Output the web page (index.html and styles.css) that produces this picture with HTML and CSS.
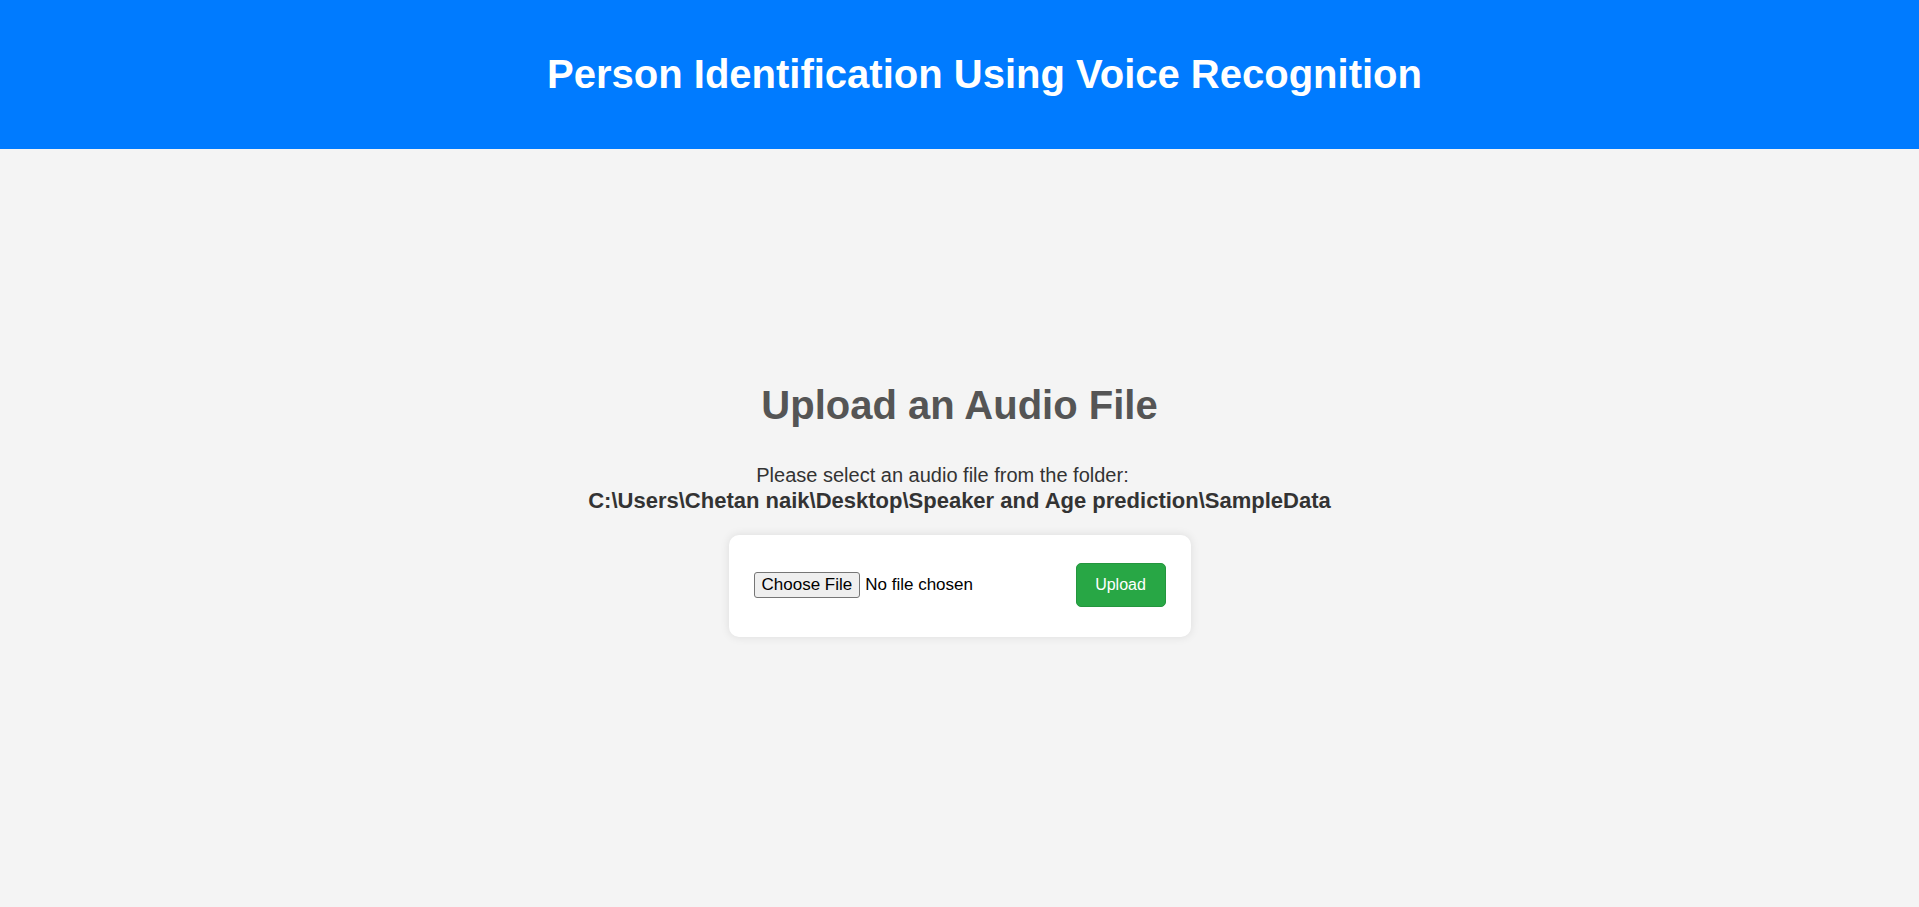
FILE: index.html
```html
<!DOCTYPE html>
<html lang="en">
<head>
<meta charset="utf-8">
<title>Person Identification Using Voice Recognition</title>
<link rel="stylesheet" href="styles.css">
</head>
<body>
<header class="site-header">
  <h1 class="site-title">Person Identification Using Voice Recognition</h1>
</header>
<main class="main">
  <h2 class="upload-title">Upload an Audio File</h2>
  <p class="upload-text"><span class="upload-lead">Please select an audio file from the folder:</span><br><strong class="upload-path">C:\Users\Chetan naik\Desktop\Speaker and Age prediction\SampleData</strong></p>
  <form class="upload-card" onsubmit="return false;">
    <input class="file-input" type="file" accept="audio/*">
    <button class="upload-btn" type="submit">Upload</button>
  </form>
</main>
</body>
</html>
```

FILE: styles.css
```css
html, body {
  margin: 0;
  padding: 0;
}
body {
  background: #f4f4f4;
  font-family: "Liberation Sans", Arial, sans-serif;
  color: #333;
  min-height: 907px;
}
.site-header {
  background: #007bff;
  height: 149px;
  box-sizing: border-box;
  padding: 0 0 0 50px;
  display: flex;
  align-items: center;
  justify-content: center;
}
.site-title {
  margin: 0;
  color: #fff;
  font-size: 40px;
  font-weight: bold;
  text-align: center;
}
.main {
  display: flex;
  flex-direction: column;
  align-items: center;
  padding-top: 233px;
}
.upload-title {
  margin: 0;
  font-size: 40px;
  font-weight: bold;
  color: #555;
  line-height: 46px;
}
.upload-text {
  margin: 35px 0 0;
  font-size: 20px;
  line-height: 25px;
  text-align: center;
  color: #333;
}
.upload-lead {
  padding-right: 34px;
}
.upload-path {
  font-size: 22px;
  color: #333;
}
.upload-card {
  margin-top: 21px;
  width: 462px;
  box-sizing: border-box;
  background: #fff;
  border-radius: 10px;
  box-shadow: 0 0 10px rgba(0, 0, 0, 0.1);
  padding: 28px 25px 30px;
  display: flex;
  align-items: center;
  justify-content: space-between;
}
.file-input {
  font-family: "Liberation Sans", Arial, sans-serif;
  font-size: 17px;
  color: #000;
}
.file-input::file-selector-button {
  font-family: "Liberation Sans", Arial, sans-serif;
  font-size: 17px;
  padding: 2px 7px;
  margin-right: 5px;
  background: #efefef;
  border: 1px solid #767676;
  border-radius: 3px;
  color: #000;
}
.upload-btn {
  font-family: "Liberation Sans", Arial, sans-serif;
  font-size: 16px;
  color: #fff;
  background: #28a745;
  border: 1px solid #24963e;
  border-radius: 5px;
  width: 90px;
  height: 44px;
  padding: 0;
  cursor: pointer;
}
```
